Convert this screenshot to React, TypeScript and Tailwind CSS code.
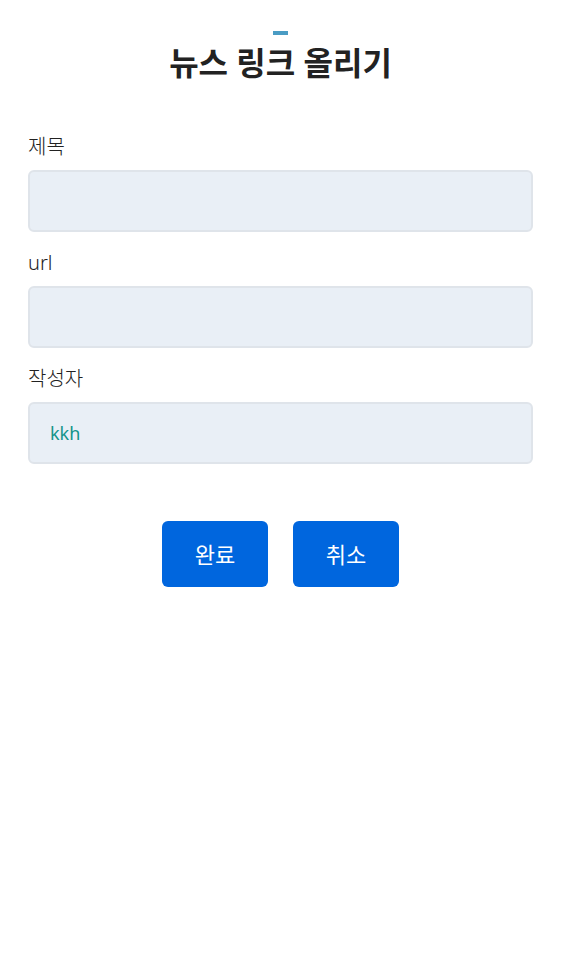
export default function App() {
  return (
    <div
      className="min-h-[960px] bg-white px-7 pt-[31px]"
      style={{ fontFamily: '"Noto Sans", "Noto Sans CJK KR", sans-serif' }}
    >
      <div className="flex flex-col items-center">
        <div className="h-[4px] w-[15px] bg-[#4a9cc4]" />
        <h1 className="mt-[6px] text-[32px] font-bold leading-[44px] text-[#222]">
          뉴스 링크 올리기
        </h1>
      </div>

      <form className="mt-[47px] flex flex-col">
        <label className="text-[20px] font-light leading-[30px] text-[#222]">제목</label>
        <input
          type="text"
          className="mt-[8px] h-[62px] w-full rounded-md border-2 border-[#dfe4ea] bg-[#e9eff6] px-5 text-[18px] outline-none"
        />

        <label className="mt-[16px] text-[20px] font-light leading-[30px] text-[#222]">url</label>
        <input
          type="text"
          className="mt-[8px] h-[62px] w-full rounded-md border-2 border-[#dfe4ea] bg-[#e9eff6] px-5 text-[18px] outline-none"
        />

        <label className="mt-[16px] text-[20px] font-light leading-[30px] text-[#222]">작성자</label>
        <input
          type="text"
          defaultValue="kkh"
          className="mt-[8px] h-[62px] w-full rounded-md border-2 border-[#dfe4ea] bg-[#e9eff6] px-5 text-[18px] text-[#13948a] outline-none"
        />

        <div className="mt-[57px] flex justify-center gap-[25px]">
          <button
            type="submit"
            className="h-[66px] w-[106px] rounded-md bg-[#0066de] text-[22px] text-white"
          >
            완료
          </button>
          <button
            type="button"
            className="h-[66px] w-[106px] rounded-md bg-[#0066de] text-[22px] text-white"
          >
            취소
          </button>
        </div>
      </form>
    </div>
  );
}
